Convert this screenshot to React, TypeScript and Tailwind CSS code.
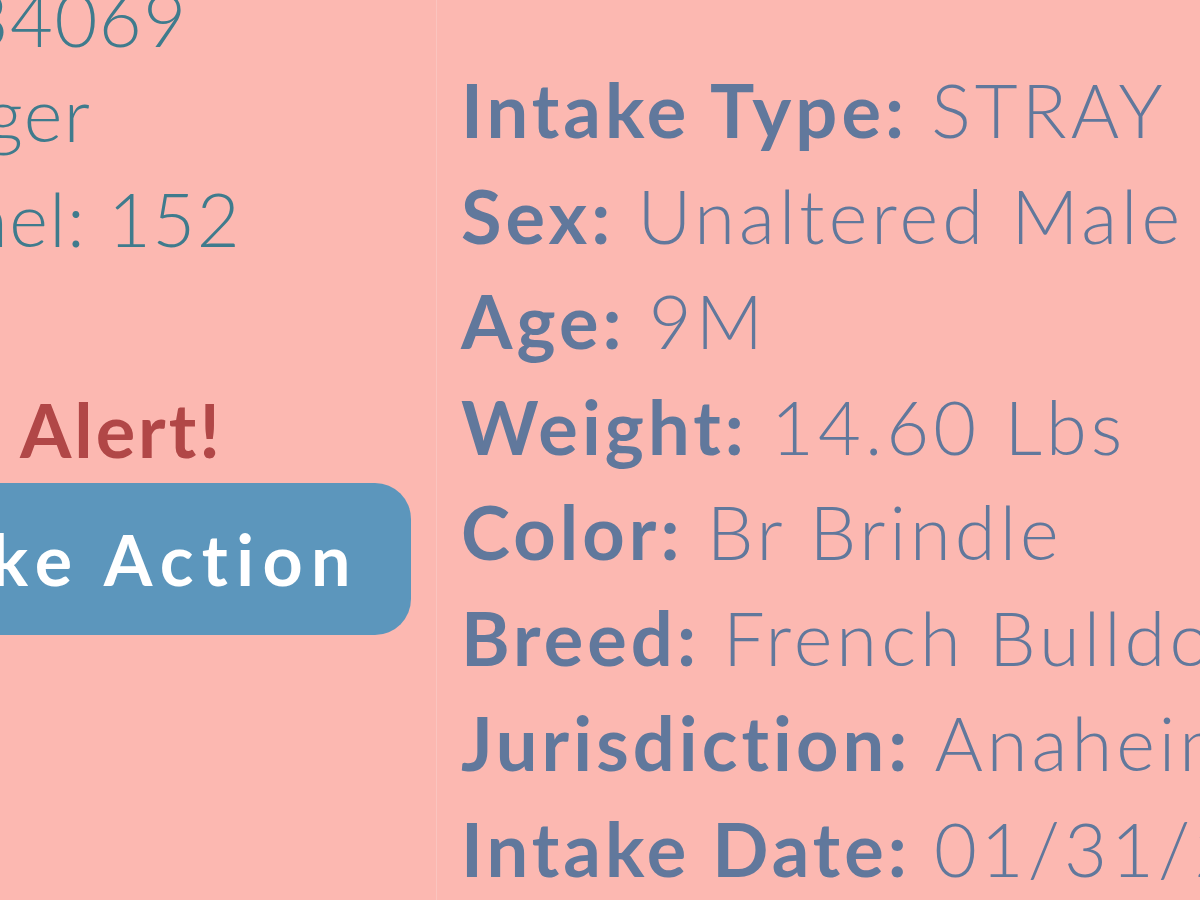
import React from 'react';

const details: { label: string; value: string }[] = [
  { label: 'Intake Type:', value: 'STRAY' },
  { label: 'Sex:', value: 'Unaltered Male' },
  { label: 'Age:', value: '9M' },
  { label: 'Weight:', value: '14.60 Lbs' },
  { label: 'Color:', value: 'Br Brindle' },
  { label: 'Breed:', value: 'French Bulldog' },
  { label: 'Jurisdiction:', value: 'Anaheim' },
  { label: 'Intake Date:', value: '01/31/2024' },
];

// cut-off line: the prefix sits in a zero-width box and spills off to the left
const Clipped: React.FC<{ prefix: string; text: string; className?: string; gap?: string }> = ({
  prefix,
  text,
  className,
  gap,
}) => (
  <div className={`flex whitespace-nowrap ${className ?? ''}`}>
    <span className="w-0 flex justify-end">{prefix}</span>
    <span className={gap}>{text}</span>
  </div>
);

export default function App() {
  return (
    <div
      className="w-[1200px] h-[900px] overflow-hidden bg-[#fcb8b1] flex text-[74px] leading-[105.5px]"
      style={{ fontFamily: 'Lato, "Open Sans", sans-serif' }}
    >
      {/* left column */}
      <div className="w-[437px] shrink-0 overflow-hidden border-r border-[#fbc4bf] text-[#3f7b8d] font-light tracking-[0.02em]">
        <Clipped prefix="Animal ID: A13" text="4069" className="ml-[10px] -mt-[34px]" />
        <Clipped prefix="Status: Dan" text="ger" className="-ml-[15px] -mt-[11px]" />
        <Clipped prefix="Location: Ken" text="nel: 152" className="-ml-[33px]" />
        <div className="h-[105.5px]" />
        <Clipped prefix="Hold" text="Alert!" gap="ml-[20px]" className="font-bold text-[#b14747] tracking-[0.04em]" />
        <div className="-ml-[200px] w-[611px] h-[152px] rounded-[36px] bg-[#5c96bc] flex items-center justify-end pr-[52px]">
          <span className="text-white font-bold text-[70px] tracking-[0.12em] leading-none whitespace-nowrap">
            Take Action
          </span>
        </div>
      </div>

      {/* right column */}
      <div className="flex-1 pl-[24px] pt-[57px] text-[#61789c] whitespace-nowrap tracking-[0.055em]">
        {details.map((d) => (
          <div key={d.label}>
            <span className="font-bold">{d.label}</span> <span className="font-light">{d.value}</span>
          </div>
        ))}
      </div>
    </div>
  );
}
